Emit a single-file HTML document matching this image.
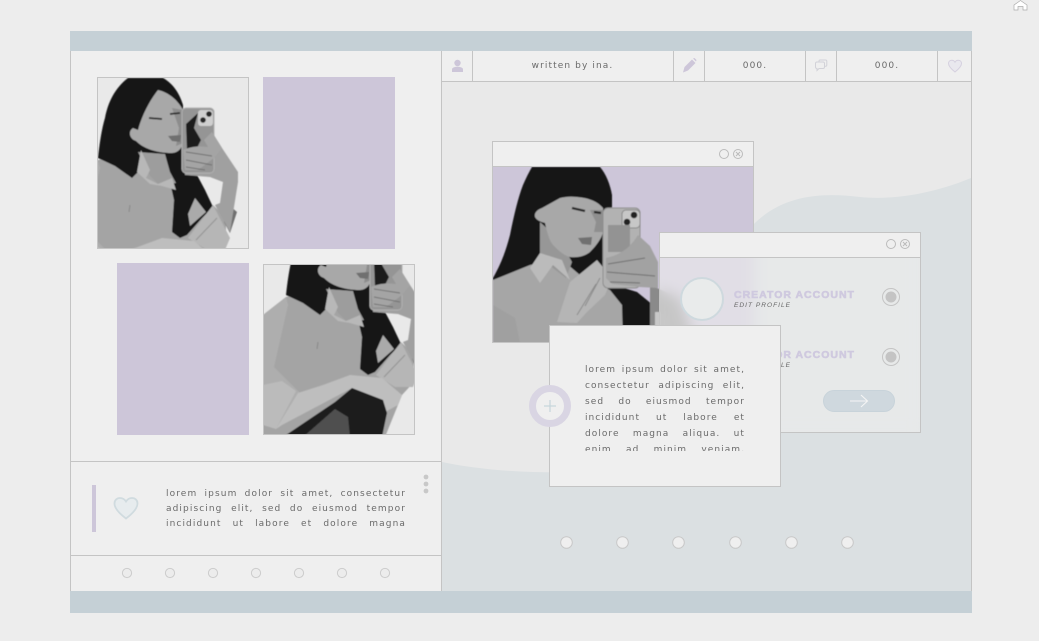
<!DOCTYPE html>
<html><head><meta charset="utf-8"><style>
*{box-sizing:border-box;margin:0;padding:0}
html,body{width:1039px;height:641px;overflow:hidden;background:#ededed;font-family:"DejaVu Sans","Liberation Sans",sans-serif}
.a{position:absolute}
.l{background:#c4c4c4;position:absolute}
.pu{background:#cdc6d9;position:absolute}
.win{position:absolute;border:1px solid #c4c4c4}
.tb{position:absolute;left:0;right:0;top:0;background:#efefef;border-bottom:1px solid #c4c4c4}
.t{position:absolute;color:#6a6a6a;font-size:9px;letter-spacing:1.1px;white-space:nowrap}
.j{text-align:justify;text-align-last:justify;white-space:nowrap;position:absolute;color:#6a6a6a;font-size:9px;letter-spacing:1.1px;height:14px;line-height:14px}
.ttl{position:absolute;left:734px;font-family:"Liberation Sans",sans-serif;font-weight:bold;font-size:10.5px;letter-spacing:1px;color:#cfc9df;-webkit-text-stroke:.6px #cfc9df;white-space:nowrap;line-height:12px}
.sub{position:absolute;left:734px;font-family:"Liberation Sans",sans-serif;font-style:italic;font-size:6.5px;letter-spacing:1.05px;color:#666;white-space:nowrap;line-height:8px}
.dot{position:absolute;border-radius:50%}
</style></head><body>

<svg width="0" height="0" style="position:absolute"><defs>
<filter id="soft" x="-5%" y="-5%" width="110%" height="110%"><feGaussianBlur stdDeviation=".55"/></filter>
<g id="fig" filter="url(#soft)">
<path d="M75 178L98 160L130 150L175 182L198 195L214 206L226 218L226 245L214 258L197 300L70 300Z" fill="#a4a4a4"/>
<path d="M128 78H163C174 84 180 95 183 105L184 150L184 173L197 175L205 190L213 207L202 218L187 235L180 238L172 232L174 200L165 160L140 155L140 170L132 178L115 166L98 158C100 140 102 128 105 118C108 102 115 88 128 78Z" fill="#151515"/>
<path d="M138 152L165 154L170 172L176 183L160 186L150 176Z" fill="#9d9d9d"/>
<path d="M141 150L150 170L146 178L158 184L172 178L176 190L162 186L150 184L137 172Z" fill="#b8b8b8"/>
<path d="M158 90C150 100 142 115 138 130L133 128C128 131 129 139 136 141C143 148 155 153 172 153C178 153 182 148 183 143V110C178 100 168 92 158 90Z" fill="#a8a8a8"/>
<path d="M172 108L183 110V143L176 146L179 128Z" fill="#8d8d8d"/>
<path d="M149 118L162 119M170 114L180 113" stroke="#2c2c2c" stroke-width="1.700" fill="none"/>
<path d="M168 136L181 135L180 142L172 141Z" fill="#707070"/>
<path d="M195 198L206 212L190 226L188 214Z" fill="#aaa"/>
<path d="M188 238L213 205L230 238L225 250L207 250Z" fill="#b6b6b6"/>
<path d="M196 240L217 218" stroke="#939393" stroke-width="1" fill="none"/>
<path d="M230 206L237 212L230 233L224 222Z" fill="#707070"/>
<path d="M215 205L220 203L223 182L210 177L185 175L183 150L212 132L222 148L238 172L238 182L230 232Z" fill="#a0a0a0"/>
<rect x="182" y="108" width="32" height="65" rx="4" fill="#959595" stroke="#b0b0b0"/>
<rect x="198" y="110" width="15" height="16" rx="3" fill="#cfcfcf"/>
<circle cx="209" cy="114" r="2.800" fill="#252525"/><circle cx="203" cy="120" r="2.800" fill="#252525"/>
<path d="M186 124L198 113L194 128L201 140L196 150L206 150L190 168L187 150Z" fill="#1e1e1e"/>
<path d="M183 150C192 146 200 146 208 147L204 140L212 132L222 148L214 158L198 170L185 170Z" fill="#a4a4a4"/>
<path d="M186 152L212 156M186 160L212 165M186 167L205 170" stroke="#707070" stroke-width=".9" fill="none"/>
<path d="M86 230L100 168L98 160L75 178V286L88 292L112 256Z" fill="#aeaeae"/>
<path d="M75 248L94 244L108 254L88 292L75 288Z" fill="#bbb"/>
<path d="M130 205L129 212" stroke="#888" fill="none"/>
<path d="M135 248L162 238L194 241L214 258L210 268L197 275L195 263L164 251L94 288L88 292L110 256Z" fill="#bebebe"/>
<path d="M95 300L147 265L164 251L195 263L199 276L194 300Z" fill="#1c1c1c"/>
<path d="M115 300L147 272L160 280L162 300Z" fill="#505050"/>
</g>
<clipPath id="c1"><rect x="98" y="78" width="150" height="170"/></clipPath>
<clipPath id="c2"><rect x="264" y="265" width="150" height="169"/></clipPath>
<clipPath id="c3"><rect x="493" y="167" width="260" height="175"/></clipPath>
</defs></svg>

<div class="a" style="left:70px;top:31px;width:902px;height:20px;background:#c5d0d6"></div>
<div class="a" style="left:70px;top:591px;width:902px;height:22px;background:#c5d0d6"></div>
<div class="a" style="left:70px;top:51px;width:372px;height:540px;background:#efefef;border-left:1px solid #c4c4c4;border-right:1px solid #c4c4c4"></div>
<div class="a" style="left:442px;top:51px;width:530px;height:540px;background:#e9e9e9;border-right:1px solid #c4c4c4"></div>

<svg class="a" style="left:0;top:0" width="1039" height="641">
<path d="M971 178C930 195 890 200 860 197C820 192 780 195 750 228L640 470C560 474 500 474 442 462L442 591L971 591Z" fill="#dbe0e2"/>
</svg>

<div class="a" style="left:442px;top:51px;width:530px;height:31px;background:#efefef;border-bottom:1px solid #c4c4c4;border-right:1px solid #c4c4c4"></div>
<div class="l" style="left:472px;top:51px;width:1px;height:30px"></div>
<div class="l" style="left:673px;top:51px;width:1px;height:30px"></div>
<div class="l" style="left:704px;top:51px;width:1px;height:30px"></div>
<div class="l" style="left:805px;top:51px;width:1px;height:30px"></div>
<div class="l" style="left:836px;top:51px;width:1px;height:30px"></div>
<div class="l" style="left:937px;top:51px;width:1px;height:30px"></div>
<div class="t" style="left:472px;width:201px;text-align:center;top:60px;line-height:12px">written by ina.</div>
<div class="t" style="left:705px;width:100px;text-align:center;top:60px;line-height:12px">000.</div>
<div class="t" style="left:837px;width:100px;text-align:center;top:60px;line-height:12px">000.</div>

<svg class="a" style="left:0;top:0" width="1039" height="641">
<circle cx="457.5" cy="63" r="3.200" fill="#cdc6d9"/><path d="M452 72V69.500C452 67.500 455 66.800 457.500 66.800S463 67.500 463 69.500V72Z" fill="#cdc6d9"/>
<path d="M683 72.500L684.500 67L692 59.500L695.500 63L688 70.500ZM693 58.500L694.500 58L696.500 60L696 61.500Z" fill="#cdc6d9"/>
<path d="M819 61.500V61C819 60.300 819.500 60 820.200 60H825.500C826.300 60 826.800 60.500 826.800 61.200V65C826.800 65.800 826.300 66.300 825.500 66.300H824.500" fill="none" stroke="#d2d2d8" stroke-width="1"/>
<path d="M817 62H823C824 62 824.500 62.500 824.500 63.500V67C824.500 68 824 68.500 823 68.500H819L817 70.500V68.500C816 68.500 815.500 68 815.500 67V63.500C815.500 62.500 816 62 817 62Z" fill="none" stroke="#d2d2d8" stroke-width="1"/>
<path d="M955 72C950 68 948.500 65.500 948.500 63.500C948.500 61.500 950 60.300 951.800 60.300C953.200 60.300 954.300 61 955 62.200C955.700 61 956.800 60.300 958.200 60.300C960 60.300 961.500 61.500 961.500 63.500C961.500 65.500 960 68 955 72Z" fill="#e9e8ee" stroke="#d5d0df" stroke-width="1"/>
</svg>

<div class="a" style="left:97px;top:77px;width:152px;height:172px;background:#e9e9e9;border:1px solid #c4c4c4"></div>
<svg class="a" style="left:0;top:0" width="1039" height="641"><g clip-path="url(#c1)"><use href="#fig"/></g></svg>
<div class="pu" style="left:263px;top:77px;width:132px;height:172px"></div>
<div class="pu" style="left:117px;top:263px;width:132px;height:172px"></div>
<div class="a" style="left:263px;top:264px;width:152px;height:171px;background:#e9e9e9;border:1px solid #c4c4c4"></div>
<svg class="a" style="left:0;top:0" width="1039" height="641"><g clip-path="url(#c2)"><g transform="translate(188 137)"><use href="#fig"/></g></g></svg>

<div class="l" style="left:71px;top:461px;width:370px;height:1px"></div>
<div class="l" style="left:71px;top:555px;width:370px;height:1px"></div>
<div class="pu" style="left:92px;top:485px;width:4px;height:47px"></div>
<svg class="a" style="left:0;top:0" width="1039" height="641">
<path d="M126 518.500C118 512.500 114.500 508 114.500 503.500C114.500 500 117 498 120 498C122.500 498 124.500 499.200 126 501.500C127.500 499.200 129.500 498 132 498C135 498 137.500 500 137.500 503.500C137.500 508 134 512.500 126 518.500Z" fill="#e7ecee" stroke="#d0dbdf" stroke-width="1.800"/>
<circle cx="426" cy="477" r="2.400" fill="#c8c8c8"/><circle cx="426" cy="484" r="2.400" fill="#c8c8c8"/><circle cx="426" cy="491" r="2.400" fill="#c8c8c8"/>
<g fill="#ececec" stroke="#ccc"><circle cx="127" cy="573" r="4.600"/><circle cx="170" cy="573" r="4.600"/><circle cx="213" cy="573" r="4.600"/><circle cx="256" cy="573" r="4.600"/><circle cx="299" cy="573" r="4.600"/><circle cx="342" cy="573" r="4.600"/><circle cx="385" cy="573" r="4.600"/></g>
<g fill="#efefef" stroke="#c8c8c8"><circle cx="566.500" cy="542.500" r="5.800"/><circle cx="622.500" cy="542.500" r="5.800"/><circle cx="678.500" cy="542.500" r="5.800"/><circle cx="735.500" cy="542.500" r="5.800"/><circle cx="791.500" cy="542.500" r="5.800"/><circle cx="847.500" cy="542.500" r="5.800"/></g>
</svg>
<div class="j" style="left:166px;top:487px;width:240px">lorem ipsum dolor sit amet, consectetur</div>
<div class="j" style="left:166px;top:502px;width:240px">adipiscing elit, sed do eiusmod tempor</div>
<div class="j" style="left:166px;top:517px;width:240px">incididunt ut labore et dolore magna</div>

<!-- window 1 -->
<div class="win" style="left:492px;top:141px;width:262px;height:202px;background:#cdc6d9"><div class="tb" style="height:25px"></div></div>
<svg class="a" style="left:0;top:0" width="1039" height="641">
<g fill="none" stroke="#bbb"><circle cx="724" cy="154" r="4.500"/><circle cx="738" cy="154" r="4.500"/><path d="M736 152L740 156M740 152L736 156"/></g>
<g clip-path="url(#c3)"><g filter="url(#soft)">
<path d="M532 167H600C606 174 610 184 612 195V210L608 283L637 292L653 305L655 343H540L493 300V278C502 262 506 250 510 235C514 215 518 198 523 185C526 178 529 172 532 167Z" fill="#171717"/>
<path d="M650 285L680 298L695 343H650Z" fill="#8a8a8a"/>
<path d="M655 312L660 312L660 343H655Z" fill="#c8c8c8"/>
<path d="M493 280L530 265L560 258L580 275L610 290L622 305L623 343H493Z" fill="#a6a6a6"/>
<path d="M540 222L560 240L572 262L566 278L540 258Z" fill="#979797"/>
<path d="M530 268L540 253L562 260L570 280L553 265L540 283Z" fill="#bbb"/>
<path d="M577 197C570 196 564 197 560 198L542 208C536 210 534 214 535 217C537 221 542 222 545 223C547 232 549 240 553 245C560 252 565 256 570 257C578 258 585 256 590 252C596 246 602 238 603 232V208C598 202 590 198 577 197Z" fill="#a8a8a8"/>
<path d="M590 210L603 210V232L594 232L596 222Z" fill="#8f8f8f"/>
<path d="M572 208L585 211M594 212L601 213" stroke="#272727" stroke-width="2.200" fill="none"/>
<path d="M578 238L592 237L591 245L582 244Z" fill="#6f6f6f"/>
<path d="M493 305L515 318L520 343H493Z" fill="#a0a0a0"/>
<path d="M570 282L597 260L612 278L605 295L587 312L577 323L557 322Z" fill="#b5b5b5"/>
<path d="M585 306L600 278M577 315L596 284" stroke="#8b8b8b" stroke-width="1" fill="none"/>
<rect x="603" y="208" width="37" height="80" rx="5" fill="#b2b2b2" stroke="#8e8e8e"/>
<rect x="622" y="210" width="18" height="18" rx="4" fill="#c7c7c7" stroke="#888"/>
<circle cx="634" cy="215" r="3.300" fill="#222"/><circle cx="627" cy="222" r="3.300" fill="#222"/>
<path d="M608 225H630V252H608Z" fill="#939393"/>
<path d="M606 258C620 255 630 248 638 235L650 246L658 262V288L640 287L612 284L606 278Z" fill="#a2a2a2"/>
<path d="M608 264L645 258M607 272L655 276M610 282L640 283" stroke="#6e6e6e" stroke-width="1" fill="none"/>
</g></g></svg>

<!-- window 2 -->
<div class="win" style="left:659px;top:232px;width:262px;height:201px;background:rgba(239,239,239,.6);-webkit-backdrop-filter:blur(7px);backdrop-filter:blur(7px)"><div class="tb" style="height:25px"></div></div>
<div class="dot" style="left:680px;top:277px;width:44px;height:44px;border:2px solid #ced9de;background:#e9ebeb"></div>
<div class="ttl" style="top:289px">CREATOR ACCOUNT</div>
<div class="sub" style="top:302px">EDIT PROFILE</div>
<div class="ttl" style="top:349px">CREATOR ACCOUNT</div>
<div class="sub" style="top:362px">EDIT PROFILE</div>
<div class="a" style="left:823px;top:390px;width:72px;height:22px;border-radius:11px;background:#cfd8de;border:1px solid #c8d3da"></div>
<svg class="a" style="left:0;top:0" width="1039" height="641">
<g fill="none" stroke="#bbb"><circle cx="891" cy="244" r="4.500"/><circle cx="905" cy="244" r="4.500"/><path d="M903 242L907 246M907 242L903 246"/></g>
<g><circle cx="891" cy="297" r="8.500" fill="none" stroke="#c4c4c4"/><circle cx="891" cy="297" r="5.500" fill="#c4c4c4"/><circle cx="891" cy="357" r="8.500" fill="none" stroke="#c4c4c4"/><circle cx="891" cy="357" r="5.500" fill="#c4c4c4"/></g>
<path d="M850 401H867M861 395L867.500 401L861 407" fill="none" stroke="#f5f5f5" stroke-width="1.100"/>
</svg>

<!-- window 3 -->
<div class="win" style="left:549px;top:325px;width:232px;height:162px;background:#efefef"></div>
<div class="a" style="left:585px;top:361px;width:160px;height:90px;overflow:hidden">
<div class="j" style="left:0;top:2px;width:160px;letter-spacing:1.05px">lorem ipsum dolor sit amet,</div>
<div class="j" style="left:0;top:18px;width:160px;letter-spacing:1.05px">consectetur adipiscing elit,</div>
<div class="j" style="left:0;top:34px;width:160px;letter-spacing:1.05px">sed do eiusmod tempor</div>
<div class="j" style="left:0;top:50px;width:160px;letter-spacing:1.05px">incididunt ut labore et</div>
<div class="j" style="left:0;top:66px;width:160px;letter-spacing:1.05px">dolore magna aliqua. ut</div>
<div class="j" style="left:0;top:82px;width:160px;letter-spacing:1.05px">enim ad minim veniam,</div>
</div>

<!-- plus circle -->
<div class="dot" style="left:529px;top:385px;width:42px;height:42px;background:#efefef;border:7px solid #d9d5e3"></div>
<svg class="a" style="left:0;top:0" width="1039" height="641"><path d="M550 400V412M544 406H556" stroke="#c8d6dc" stroke-width="1.300"/>
<path d="M1014 5L1020.500 .5L1027 5V10H1023V6.500H1018V10H1014Z" fill="#fff" stroke="#aaa" stroke-width=".7"/>
</svg>
</body></html>
